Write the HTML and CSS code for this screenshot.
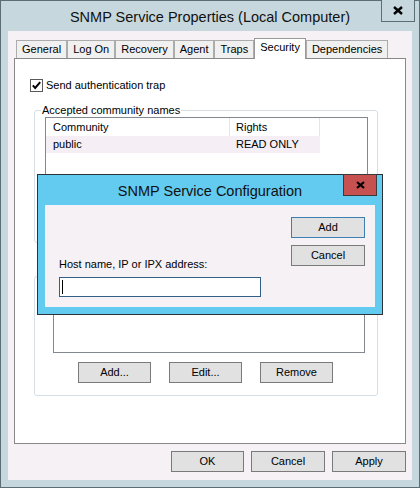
FILE: index.html
```html
<!DOCTYPE html>
<html>
<head>
<meta charset="utf-8">
<link rel="stylesheet" href="styles.css">
</head>
<body>
<div class="window">
  <div class="titlebar">
    <span class="title">SNMP Service Properties (Local Computer)</span>
  </div>
  <div class="close main-close">
    <svg width="10" height="9" viewBox="0 0 10 9"><path d="M1 1 L9 8 M9 1 L1 8" stroke="#000" stroke-width="2.4" fill="none"/></svg>
  </div>
  <div class="client">
    <div class="tabs">
      <div class="tab">General</div>
      <div class="tab">Log On</div>
      <div class="tab">Recovery</div>
      <div class="tab">Agent</div>
      <div class="tab">Traps</div>
      <div class="tab active">Security</div>
      <div class="tab">Dependencies</div>
    </div>
    <div class="panel">
      <div class="check-row">
        <span class="checkbox">
          <svg width="13" height="13" viewBox="0 0 13 13"><rect x="0.5" y="0.5" width="12" height="12" fill="#fff" stroke="#5a5a5a"/><path d="M2.8 6.4 L5.2 9 L10.2 3.2" stroke="#000" stroke-width="2" fill="none"/></svg>
        </span>
        <span>Send authentication trap</span>
      </div>
      <div class="group group-1">
        <div class="group-label">Accepted community names</div>
        <div class="listview">
          <div class="lv-head">
            <div class="col c1">Community</div>
            <div class="col c2">Rights</div>
          </div>
          <div class="lv-row">
            <div class="col c1">public</div>
            <div class="col c2">READ ONLY</div>
          </div>
        </div>
      </div>
      <div class="group group-2">
        <div class="listbox"></div>
        <div class="btn-row">
          <div class="btn">Add...</div>
          <div class="btn">Edit...</div>
          <div class="btn">Remove</div>
        </div>
      </div>
    </div>
    <div class="footer">
      <div class="btn">OK</div>
      <div class="btn">Cancel</div>
      <div class="btn">Apply</div>
    </div>
  </div>
</div>

<div class="dialog">
  <div class="dlg-titlebar">SNMP Service Configuration</div>
  <div class="close dlg-close">
    <svg width="9" height="8" viewBox="0 0 9 8"><path d="M1 1 L8 7 M8 1 L1 7" stroke="#000" stroke-width="2.2" fill="none"/></svg>
  </div>
  <div class="dlg-client">
    <div class="dlg-left">
      <div class="dlg-label">Host name, IP or IPX address:</div>
      <div class="textbox"><span class="caret"></span></div>
    </div>
    <div class="dlg-right">
      <div class="btn default">Add</div>
      <div class="btn">Cancel</div>
    </div>
  </div>
</div>
</body>
</html>
```

FILE: styles.css
```css
html, body {
  margin: 0;
  padding: 0;
}
body {
  width: 420px;
  height: 488px;
  position: relative;
  overflow: hidden;
  font-family: "Liberation Sans", Arial, sans-serif;
  font-size: 11px;
  color: #000;
}
.window {
  position: relative;
  box-sizing: border-box;
  height: 488px;
  border: 1px solid #5b6e75;
  background: #c6d8dd;
  padding: 0 7px 7px;
  display: flex;
  flex-direction: column;
}
.titlebar {
  height: 30px;
  display: flex;
  align-items: center;
  justify-content: center;
}
.title {
  font-size: 14.5px;
  line-height: 16px;
  padding-top: 1px;
  color: #111;
}
.close {
  position: absolute;
  box-sizing: border-box;
  width: 34px;
  height: 22px;
  border: 1px solid #5b6e75;
  border-top-width: 0;
  display: flex;
  align-items: center;
  justify-content: center;
}
.main-close {
  top: -1px;
  right: 4px;
  background: #c6d8dd;
}
.client {
  flex: 1;
  background: #f5f1f5;
  display: flex;
  flex-direction: column;
  padding: 7px 6px 8px;
}
.tabs {
  display: flex;
  align-items: flex-end;
  height: 20px;
  padding-left: 2px;
}
.tab {
  height: 17px;
  line-height: 17px;
  border: 1px solid #acacac;
  border-bottom: 0;
  background: #f0f0f0;
  padding: 0 5px;
  white-space: nowrap;
}
.tab.active {
  height: 20px;
  background: #fff;
  border-color: #999;
  margin-bottom: -1px;
  position: relative;
  z-index: 1;
}
.panel {
  flex: 1;
  border: 1px solid #898989;
  background: #fff;
  display: flex;
  flex-direction: column;
  padding: 0 27px 0 15px;
}
.check-row {
  display: flex;
  align-items: center;
  gap: 3px;
  height: 13px;
  margin-top: 20px;
  line-height: 13px;
}
.checkbox {
  width: 13px;
  height: 13px;
  display: block;
}
.checkbox svg {
  display: block;
}
.group {
  border: 1px solid #d5dfe5;
  border-radius: 3px;
  display: flex;
  flex-direction: column;
  margin-left: 4px;
}
.group-1 {
  margin-top: 18px;
  padding: 0 9px 9px 10px;
}
.group-label {
  align-self: flex-start;
  background: #fff;
  line-height: 14px;
  height: 14px;
  margin: -8px 0 0 -4px;
  padding: 0 1px;
}
.listview {
  box-sizing: border-box;
  height: 116px;
  border: 1px solid #828790;
  display: flex;
  flex-direction: column;
}
.lv-head {
  display: flex;
  height: 18px;
  line-height: 18px;
}
.lv-head .col {
  border-right: 1px solid #e5e5e5;
}
.col {
  box-sizing: border-box;
  white-space: nowrap;
}
.c1 {
  width: 184px;
  padding-left: 7px;
}
.c2 {
  width: 90px;
  padding-left: 6px;
}
.lv-row {
  display: flex;
  align-self: flex-start;
  height: 17px;
  line-height: 17px;
  background: #f5eff5;
}
.group-2 {
  margin-top: 33px;
  padding: 0 12px 12px 18px;
}
.listbox {
  box-sizing: border-box;
  height: 62px;
  margin-top: 14px;
  border: 1px solid #828790;
}
.btn-row {
  display: flex;
  gap: 18px;
  padding-left: 25px;
  margin-top: 9px;
}
.btn {
  box-sizing: border-box;
  width: 73px;
  height: 21px;
  line-height: 19px;
  border: 1px solid #7a7a7a;
  background: #e1e1e1;
  text-align: center;
}
.footer {
  display: flex;
  justify-content: flex-end;
  gap: 7px;
  margin-top: 7px;
}
.footer .btn {
  width: 74px;
}
.footer .btn:first-child {
  width: 73px;
}

/* dialog */
.dialog {
  position: absolute;
  left: 37px;
  top: 174px;
  width: 346px;
  height: 141px;
  box-sizing: border-box;
  border: 1px solid #2b3338;
  background: #63caf0;
  padding: 0 7px 7px;
  display: flex;
  flex-direction: column;
}
.dlg-titlebar {
  height: 30px;
  display: flex;
  align-items: center;
  justify-content: center;
  font-size: 14.5px;
  color: #111;
  padding-top: 1px;
  box-sizing: border-box;
}
.dlg-close {
  top: -1px;
  right: 5px;
  border: 1px solid #3a3a3a;
  background: #c75050;
}
.dlg-client {
  flex: 1;
  background: #f5f1f5;
  display: flex;
  padding: 12px 10px 10px 14px;
}
.dlg-left {
  flex: 1;
  display: flex;
  flex-direction: column;
  justify-content: flex-end;
}
.dlg-label {
  line-height: 14px;
  margin-bottom: 6px;
}
.textbox {
  box-sizing: border-box;
  width: 202px;
  height: 20px;
  border: 1px solid #335f87;
  background: #fff;
  padding: 2px 0 0 2px;
}
.caret {
  display: block;
  width: 1px;
  height: 14px;
  background: #000;
}
.dlg-right {
  display: flex;
  flex-direction: column;
  gap: 7px;
}
.dlg-right .btn {
  width: 74px;
}
.btn.default {
  border-color: #3c7fb1;
}
```
